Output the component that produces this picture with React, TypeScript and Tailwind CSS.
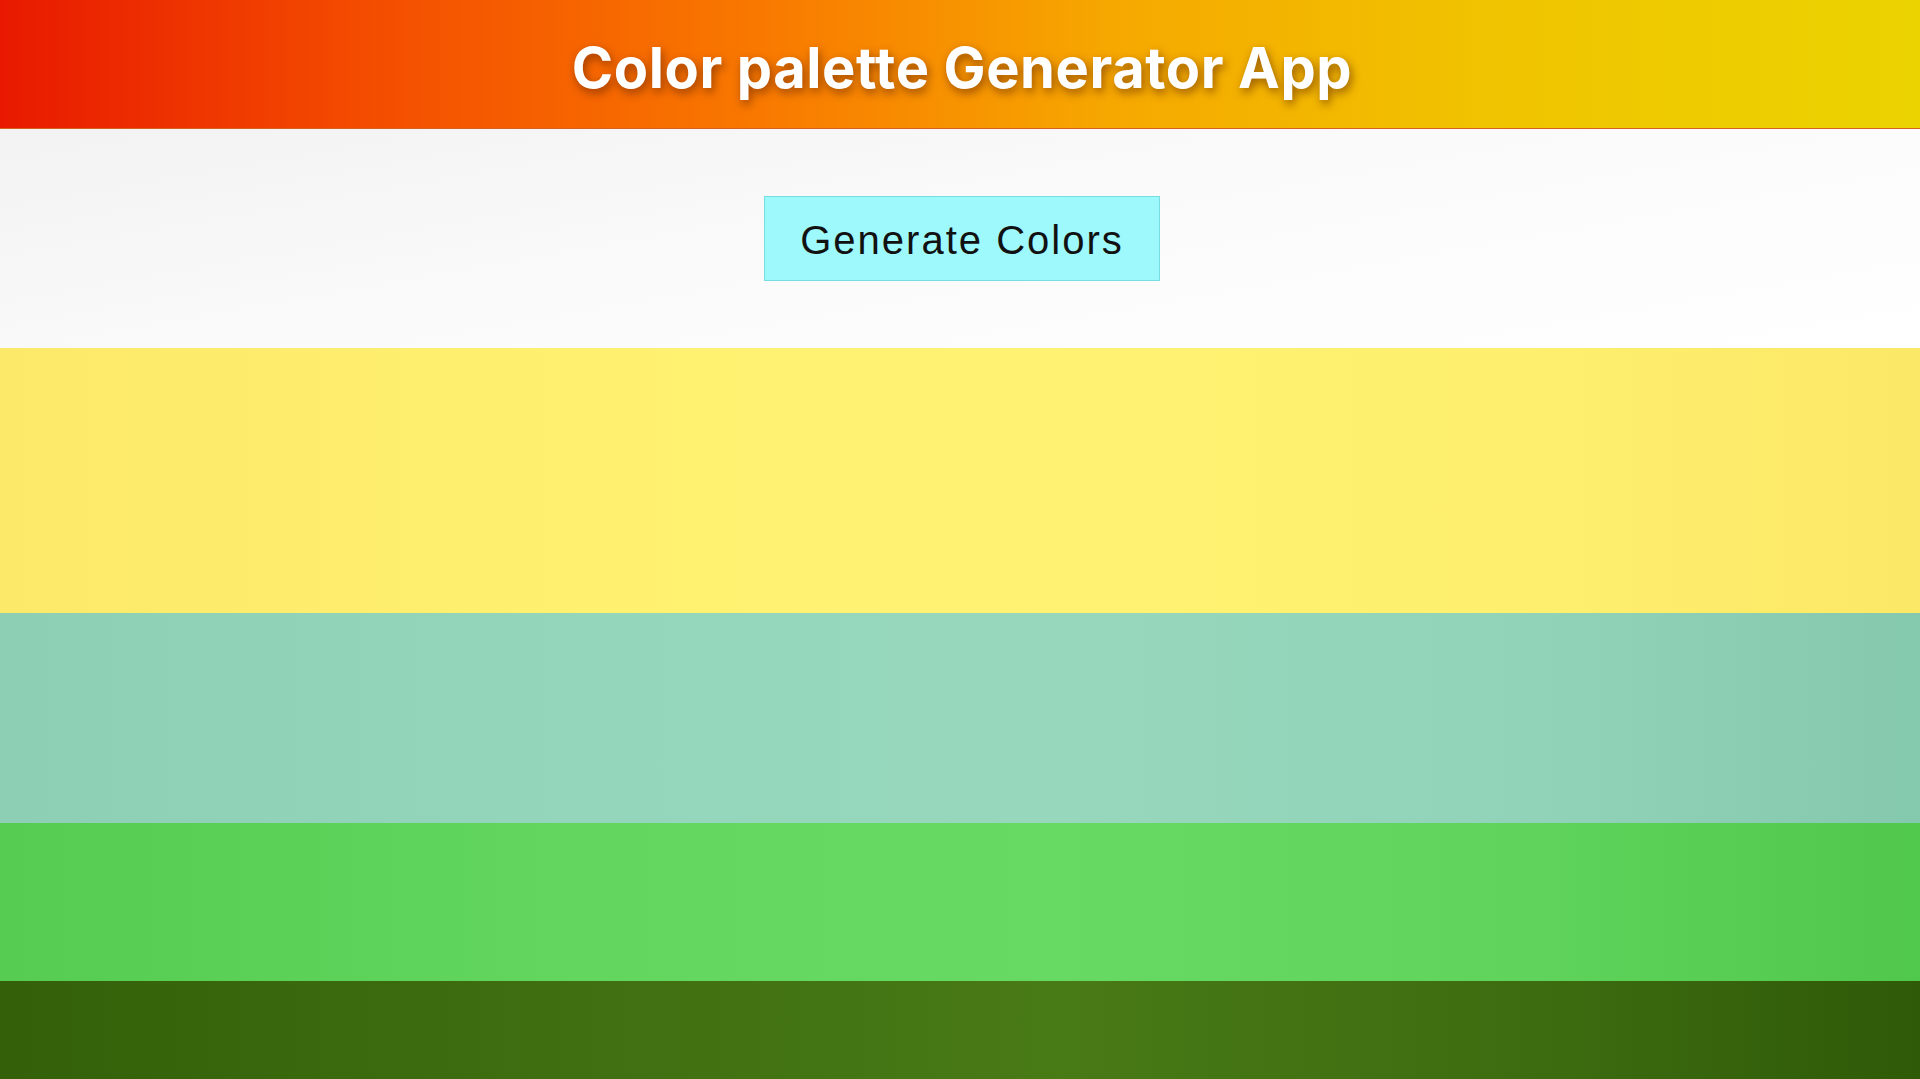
import { useState } from "react"

const bands = [
    { id: 1, h: "h-[265px]", cls: "bg-[linear-gradient(90deg,#fce96a_0%,#fff070_30%,#fff272_55%,#feef6e_80%,#fbe866_100%)]" },
    { id: 2, h: "h-[210px]", cls: "bg-[linear-gradient(90deg,#8ccfb4_0%,#94d6bb_30%,#97d8bd_55%,#91d3b8_80%,#84c8ad_100%)]" },
    { id: 3, h: "h-[158px]", cls: "bg-[linear-gradient(90deg,#56cc52_0%,#62d65e_30%,#67da63_55%,#5fd35b_80%,#50c84c_100%)]" },
    { id: 4, h: "h-[98px]", cls: "bg-[linear-gradient(90deg,#336009_0%,#3f6f11_30%,#487a16_55%,#3d6c10_80%,#2f5a08_100%)]" },
]

export default function App() {
    const [seed, setSeed] = useState(0)
    return (
        <div className="w-full h-[1079px] overflow-hidden flex flex-col" key={seed}>
            <header className="h-[129px] shrink-0 flex items-start justify-center pt-[40px] bg-[linear-gradient(90deg,#e81900_0%,#f34a00_18%,#f97a00_40%,#f6a800_58%,#f0c400_78%,#ebd300_100%)] border-b border-[#d86020]">
                <h1 className="text-white text-[56px] leading-none font-bold tracking-[0.6px] ml-[4px] [font-family:Inter,'Open_Sans',sans-serif] [text-shadow:2px_4px_10px_rgba(90,30,0,0.6)]">
                    Color palette Generator App
                </h1>
            </header>
            <section className="h-[219px] shrink-0 flex items-center justify-center pl-[4px] bg-[linear-gradient(170deg,#f2f2f2_0%,#fafafa_45%,#ffffff_100%)]">
                <button
                    onClick={() => setSeed(seed + 1)}
                    className="w-[396px] h-[85px] bg-[#9ef9fc] border border-[#78dde2] text-[#111] text-[40px] tracking-[2px] [font-family:'Liberation_Sans',Arial,sans-serif] pt-[2px]"
                >
                    Generate Colors
                </button>
            </section>
            {bands.map(({ id, h, cls }) => (
                <div key={id} className={`${h} shrink-0 ${cls}`} />
            ))}
        </div>
    )
}
